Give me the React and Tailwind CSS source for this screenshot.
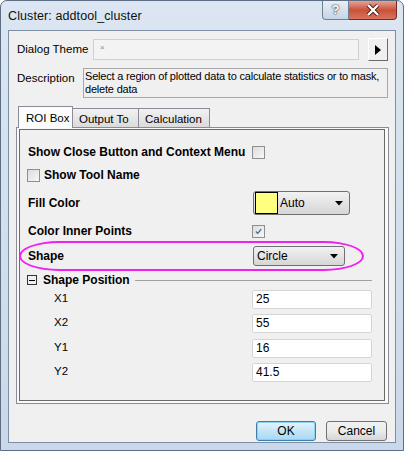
import React from "react";

const ui = "font-['Liberation_Sans',Arial,sans-serif]";

function Check({ checked }) {
  return (
    <div className="w-[13px] h-[13px] border border-[#8f8f8f] bg-gradient-to-br from-[#dcdcdc] to-[#f8f8f8] p-[2px] flex items-center justify-center">
      {checked && (
        <svg width="9" height="9" viewBox="0 0 9 9">
          <path d="M1 4.5 L3.5 7 L8 1.5" fill="none" stroke="#4a5f97" strokeWidth="1.6" />
        </svg>
      )}
    </div>
  );
}

function Arrow() {
  return (
    <svg width="8" height="5" viewBox="0 0 8 5" className="shrink-0">
      <path d="M0 0 H8 L4 4.5 Z" fill="#000" />
    </svg>
  );
}

function Row({ h, label, bold, indent, children }) {
  return (
    <div className={`flex items-center ${h}`}>
      <div className={`${indent ? "w-[232px] pl-[34px]" : "w-[232px] pl-[8px]"} ${bold ? "font-bold text-[12px]" : "text-[11.5px]"}`}>
        {label}
      </div>
      {children}
    </div>
  );
}

function Field({ value }) {
  return (
    <div className="w-[120px] h-[19px] bg-white border border-[#d5d5d5] rounded-[2px] text-[12px] pl-[3px] flex items-center">
      {value}
    </div>
  );
}

export default function App() {
  return (
    <div className={`${ui} w-[404px] h-[451px] bg-[#fff] text-black`}>
      <div className="w-[404px] h-[451px] rounded-t-[7px] border border-[#5d6d82] bg-gradient-to-b from-[#dbe6f2] via-[#d3dfec] to-[#c9d8ea] flex flex-col">
        {/* title bar */}
        <div className="h-[29px] flex items-start justify-between pl-[7px] pr-[6px]">
          <div className="text-[12.5px] pt-[6px] text-[#101010] tracking-[0.1px]">Cluster: addtool_cluster</div>
          <div className="flex">
            <div className="w-[27px] h-[19px] rounded-bl-[4px] border border-t-0 border-[#6e7f96] bg-gradient-to-b from-[#e7eef6] to-[#c7d5e6] flex items-center justify-center text-[13px] font-bold text-[#fff] [text-shadow:0_0_1px_#333,0_0_2px_#333]">
              ?
            </div>
            <div className="w-[48px] h-[19px] rounded-br-[4px] border border-t-0 border-l-0 border-[#7a2b1e] bg-gradient-to-b from-[#e8a293] via-[#c9513a] to-[#d8735c] flex items-center justify-center">
              <svg width="14" height="12" viewBox="0 0 14 12">
                <path d="M2 1 L12 11 M12 1 L2 11" stroke="#4a1a10" strokeWidth="4" />
                <path d="M2 1 L12 11 M12 1 L2 11" stroke="#fff" strokeWidth="2.4" />
              </svg>
            </div>
          </div>
        </div>

        {/* client */}
        <div className="ml-[7px] w-[388px] h-[413px] border border-[#7d8da2] bg-[#f0f0f0] flex flex-col pt-[7px] px-[7px]">
          <div className="flex items-center h-[23px]">
            <div className="w-[77px] pl-[1px] text-[11.5px]">Dialog Theme</div>
            <div className="w-[266px] h-[21px] border border-[#d0d0d0] bg-[#f3f3f3] text-[8px] text-[#888] pl-[6px] pt-[2px]">×</div>
            <div className="ml-[9px] w-[20px] h-[23px] border border-t-white border-l-white border-r-[#696969] border-b-[#696969] bg-[#f0f0f0] flex items-center justify-center">
              <svg width="6" height="10" viewBox="0 0 6 10"><path d="M0 0 L6 5 L0 10 Z" fill="#000" /></svg>
            </div>
          </div>
          <div className="flex mt-[7px] h-[29px]">
            <div className="w-[67px] pl-[1px] pt-[2px] text-[11.5px]">Description</div>
            <div className="w-[305px] h-[30px] border border-[#a8a8a8] bg-[#f0f0f0] text-[11px] tracking-[-0.2px] leading-[13px] pl-[1px] pt-[1px]">
              Select a region of plotted data to calculate statistics or to mask, delete data
            </div>
          </div>

          {/* tabs */}
          <div className="flex items-end h-[21px] mt-[9px] pl-[2px] text-[11.5px]">
            <div className="w-[55px] h-[22px] border border-b-0 border-[#898c95] bg-[#fcfcfc] pl-[7px] pt-[3px] relative z-10 -mb-[1px]">ROI Box</div>
            <div className="w-[66px] h-[19px] border border-l-0 border-b-0 border-[#898c95] bg-gradient-to-b from-[#f2f2f2] to-[#dbdbdb] pl-[6px] pt-[2px]">Output To</div>
            <div className="w-[71px] h-[19px] border border-l-0 border-b-0 border-[#898c95] bg-gradient-to-b from-[#f2f2f2] to-[#dbdbdb] pl-[6px] pt-[2px]">Calculation</div>
          </div>
          <div className="w-[373px] h-[277px] border border-[#898c95] bg-[#fafafa] pl-[2px] pt-[1px]">
            <div className="w-[366px] h-[272px] border border-[#6a6a6a] bg-[#f0f0f0] relative flex flex-col pt-[10px]">
              <Row h="h-[24px]" label="Show Close Button and Context Menu" bold>
                <Check />
              </Row>
              <div className="flex items-center h-[22px] pl-[7px] gap-[4px] font-bold text-[12px]">
                <Check />
                <span>Show Tool Name</span>
              </div>
              <Row h="h-[34px]" label="Fill Color" bold>
                <div className="ml-[1px] w-[97px] h-[24px] border border-[#707070] rounded-[3px] bg-gradient-to-b from-[#f2f2f2] to-[#d6d6d6] flex items-center pl-[1px] pr-[6px]">
                  <div className="w-[23px] h-[22px] border border-[#000] bg-[#ffff80]" />
                  <span className="ml-[2px] text-[12px] flex-1">Auto</span>
                  <Arrow />
                </div>
              </Row>
              <Row h="h-[22px]" label="Color Inner Points" bold>
                <Check checked />
              </Row>
              <Row h="h-[28px]" label="Shape" bold>
                <div className="ml-[1px] w-[92px] h-[20px] border border-[#707070] rounded-[3px] bg-gradient-to-b from-[#f2f2f2] to-[#d6d6d6] flex items-center pl-[3px] pr-[6px]">
                  <span className="text-[12px] flex-1">Circle</span>
                  <Arrow />
                </div>
              </Row>
              <div className="flex items-center h-[20px] pl-[7px]">
                <div className="w-[10px] h-[10px] border border-[#333] flex items-center justify-center">
                  <div className="w-[6px] h-[1px] bg-[#000]" />
                </div>
                <span className="ml-[6px] font-bold text-[12px]">Shape Position</span>
                <div className="ml-[5px] flex-1 mr-[12px] h-[1px] bg-[#a0a0a0]" />
              </div>
              <Row h="h-[18px]" label="X1" indent>
                <Field value="25" />
              </Row>
              <Row h="h-[30px]" label="X2" indent>
                <Field value="55" />
              </Row>
              <Row h="h-[20px]" label="Y1" indent>
                <Field value="16" />
              </Row>
              <Row h="h-[28px]" label="Y2" indent>
                <Field value="41.5" />
              </Row>

              {/* highlight annotation */}
              <div className="absolute left-[-1px] top-[111px] w-[345px] h-[30px] border-2 border-[#f21ef2] rounded-[40px/15px] pointer-events-none" />
            </div>
          </div>

          <div className="flex justify-end gap-[10px] mt-[17px] pr-[1px] text-[12px]">
            <div className="w-[60px] h-[20px] rounded-[3px] border border-[#3c7fb1] bg-gradient-to-b from-[#e5f4fc] via-[#c4e5f6] to-[#a7d9f5] shadow-[inset_0_0_0_1px_#8fd0f0] flex items-center justify-center">OK</div>
            <div className="w-[61px] h-[20px] rounded-[3px] border border-[#707070] bg-gradient-to-b from-[#f2f2f2] via-[#ebebeb] to-[#d6d6d6] flex items-center justify-center">Cancel</div>
          </div>
        </div>
      </div>
    </div>
  );
}
